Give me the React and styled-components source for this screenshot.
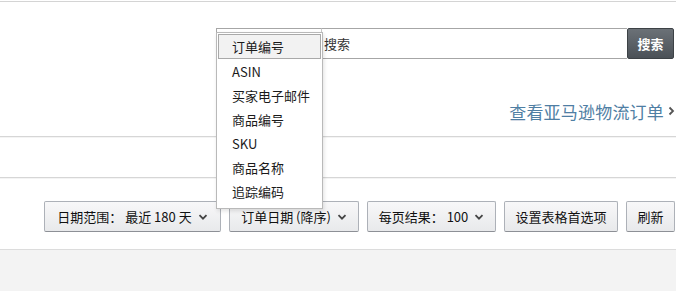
import React from "react";
import styled, { createGlobalStyle } from "styled-components";

const Global = createGlobalStyle`
  html, body { margin: 0; padding: 0; background: #fff; }
  body { font-family: "Noto Sans CJK SC", "Noto Sans", "Liberation Sans", sans-serif; color: #111; }
`;

const Page = styled.div`
  width: 676px;
  position: relative;
`;

const TopRule = styled.div`
  height: 1px;
  margin-top: 1px;
  background: #d4d4d4;
`;

const SearchRow = styled.div`
  display: flex;
  justify-content: flex-end;
  margin-top: 26px;
  padding-right: 2px;
`;

const SearchBar = styled.div`
  position: relative;
  display: flex;
  width: 458px;
  height: 31px;
`;

const SelectBox = styled.div`
  width: 106px;
  box-sizing: border-box;
  border: 1px solid #a6a6a6;
  border-right: 1px solid #c8c8c8;
  background: #fff;
`;

const Input = styled.div`
  flex: 1;
  box-sizing: border-box;
  border: 1px solid #a6a6a6;
  border-left: none;
  border-right: none;
  font-size: 13px;
  line-height: 29px;
  padding-left: 2px;
  color: #333;
`;

const SearchButton = styled.button`
  width: 47px;
  height: 31px;
  border: 1px solid #3d4246;
  border-radius: 2px;
  background: linear-gradient(#6b7177, #4b5157);
  color: #fff;
  font-family: inherit;
  font-weight: bold;
  font-size: 13px;
  padding: 0;
`;

const Menu = styled.ul`
  position: absolute;
  left: 0;
  top: 4px;
  width: 107px;
  box-sizing: border-box;
  margin: 0;
  padding: 1px 1px 5px;
  list-style: none;
  background: #fff;
  border: 1px solid #b9b9b9;
  box-shadow: 1px 2px 4px rgba(0,0,0,0.12);
  z-index: 5;
`;

const MenuItem = styled.li`
  height: ${p => (p.$active ? 25 : 24)}px;
  box-sizing: border-box;
  display: flex;
  align-items: center;
  font-size: 13px;
  padding-left: 13px;
  color: #1a1a1a;
  border: 1px solid ${p => (p.$active ? "#a9a9a9" : "transparent")};
  background: ${p => (p.$active ? "#f2f2f2" : "transparent")};
`;

const LinkRow = styled.div`
  display: flex;
  justify-content: flex-end;
  margin-top: 40px;
  height: 24px;
  align-items: center;
  padding-right: 1px;
`;

const FbaLink = styled.a`
  color: #4f7ea3;
  font-size: 17px;
  letter-spacing: 0.2px;
  text-decoration: none;
  display: flex;
  align-items: center;
  gap: 4px;
`;

const Rule = styled.div`
  height: 1px;
  background: #d6d6d6;
  margin-top: ${p => p.$mt}px;
  box-shadow: 0 1px 0 #f4f4f4;
`;

const Toolbar = styled.div`
  display: flex;
  justify-content: flex-end;
  gap: 8px;
  margin-top: 23px;
  padding-right: 1px;
`;

const ToolButton = styled.button`
  width: ${p => p.$w}px;
  height: 31px;
  box-sizing: border-box;
  padding: 0;
  border: 1px solid #adb1b8;
  border-bottom-color: #8d9096;
  border-radius: 2px;
  background: linear-gradient(#f8f8f9, #e8e9eb);
  font-family: inherit;
  font-size: 13px;
  color: #111;
  display: flex;
  align-items: center;
  justify-content: center;
  gap: 6px;
  white-space: pre;
`;

const Panel = styled.div`
  margin-top: 17px;
  height: 42px;
  background: #f3f3f3;
  border-top: 1px solid #dcdcdc;
`;

const Chevron = ({ size = 10 }) => (
  <svg width={size} height={size} viewBox="0 0 10 10">
    <path d="M1.5 3.2 L5 6.7 L8.5 3.2" fill="none" stroke="#444" strokeWidth="1.8" />
  </svg>
);

const RightArrow = () => (
  <svg width="7" height="10" viewBox="0 0 7 10">
    <path d="M1.5 1.5 L5 5 L1.5 8.5" fill="none" stroke="#555" strokeWidth="1.8" />
  </svg>
);

const items = ["订单编号", "ASIN", "买家电子邮件", "商品编号", "SKU", "商品名称", "追踪编码"];

export default function App() {
  return (
    <Page>
      <Global />
      <TopRule />
      <SearchRow>
        <SearchBar>
          <SelectBox />
          <Input>搜索</Input>
          <SearchButton>搜索</SearchButton>
          <Menu>
            {items.map((t, i) => (
              <MenuItem key={t} $active={i === 0}>{t}</MenuItem>
            ))}
          </Menu>
        </SearchBar>
      </SearchRow>
      <LinkRow>
        <FbaLink href="#">查看亚马逊物流订单<RightArrow /></FbaLink>
      </LinkRow>
      <Rule $mt={13} />
      <Rule $mt={40} />
      <Toolbar>
        <ToolButton $w={177}>日期范围： 最近 180 天<Chevron /></ToolButton>
        <ToolButton $w={130}>订单日期 (降序)<Chevron /></ToolButton>
        <ToolButton $w={129}>每页结果： 100<Chevron /></ToolButton>
        <ToolButton $w={114}>设置表格首选项</ToolButton>
        <ToolButton $w={49}>刷新</ToolButton>
      </Toolbar>
      <Panel />
    </Page>
  );
}
